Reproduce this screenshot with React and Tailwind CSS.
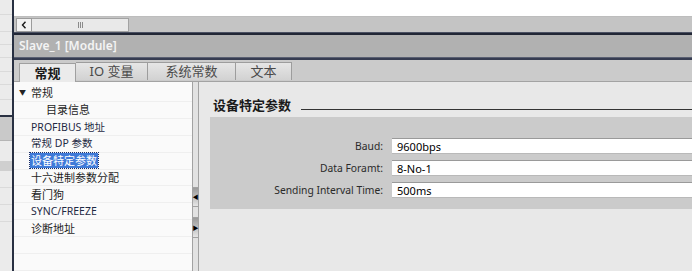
import React from 'react';

const font = "font-['Noto_Sans','Noto_Sans_CJK_SC',sans-serif]";

const treeItems = [
    { label: '常规', indent: false, caret: true },
    { label: '目录信息', indent: true },
    { label: 'PROFIBUS 地址' },
    { label: '常规 DP 参数' },
    { label: '设备特定参数', selected: true },
    { label: '十六进制参数分配' },
    { label: '看门狗' },
    { label: 'SYNC/FREEZE' },
    { label: '诊断地址' },
    { label: '' },
    { label: '' },
];

const tabs = [
    { label: '常规', w: 'w-[57px]', active: true },
    { label: 'IO 变量', w: 'w-[72px]' },
    { label: '系统常数', w: 'w-[88px]' },
    { label: '文本', w: 'w-[56px]' },
];

const params = [
    { label: 'Baud:', value: '9600bps' },
    { label: 'Data Foramt:', value: '8-No-1' },
    { label: 'Sending Interval Time:', value: '500ms' },
];

const LeftStrip = () => (
    <div className="w-[12px] h-full flex flex-col bg-[#ebebeb] shrink-0">
        <div className="h-[15px] border-b border-[#dadada]"></div>
        <div className="h-[17px] border-b border-[#dadada]"></div>
        <div className="h-[13px] border-b border-[#dadada]"></div>
        <div className="h-[13px] border-b border-[#dadada]"></div>
        <div className="h-[14px] border-b border-[#dadada]"></div>
        <div className="h-[13px] border-b border-[#dadada]"></div>
        <div className="h-[15px] border-b border-[#dadada]"></div>
        <div className="h-[17px] border-b-2 border-[#2a3142]"></div>
        <div className="h-[24px] bg-[#c9c9c9] border-b border-[#b5b5b5]"></div>
        <div className="h-[20px]"></div>
        <div className="h-[10px] bg-[#cfcfcf]"></div>
        <div className="h-[17px] border-b border-[#dadada]"></div>
        <div className="h-[17px] border-b border-[#dadada]"></div>
        <div className="h-[17px] border-b border-[#dadada]"></div>
        <div className="flex-1"></div>
    </div>
);

const App = () => {
    return (
        <div className={`w-[692px] h-[271px] flex overflow-hidden bg-[#e8e8e8] ${font}`}>
            <LeftStrip />
            <div className="w-[2px] h-full bg-[#283042] shrink-0"></div>

            <div className="flex-1 flex flex-col min-w-0">
                {/* top white strip */}
                <div className="h-[16px] bg-white"></div>

                {/* horizontal scrollbar */}
                <div className="h-[16px] bg-[#c4c4c4] flex items-center pl-[2px] border-t border-[#bdbdbd]">
                    <div className="w-[16px] h-[14px] bg-[#f2f2f2] border border-[#9c9c9c] flex items-center justify-center">
                        <svg width="6" height="8" viewBox="0 0 6 8">
                            <path d="M4.5 0.8 L1.5 4 L4.5 7.2" fill="none" stroke="#1a1a1a" strokeWidth="1.4" />
                        </svg>
                    </div>
                    <div className="w-[97px] h-[14px] bg-[#e9e9e9] border border-[#a3a3a3] border-l-0 flex items-center justify-center gap-px">
                        <div className="w-px h-[6px] bg-[#8a8a8a]"></div>
                        <div className="w-px h-[6px] bg-[#8a8a8a]"></div>
                        <div className="w-px h-[6px] bg-[#8a8a8a]"></div>
                    </div>
                </div>

                <div className="h-[3px] bg-[#222736] border-t border-[#4b5163]"></div>

                {/* title bar */}
                <div className="h-[22px] bg-[#b1b1b1] flex items-center pl-[5px]">
                    <span className="text-[12px] font-semibold text-[#f4f4f4] leading-none">Slave_1 [Module]</span>
                </div>

                <div className="h-[3px] bg-[#363c51] border-t border-[#5a6072]"></div>

                {/* tab bar */}
                <div className="h-[22px] bg-[#cbcbcb] border-b border-[#a3a3a3] flex items-end pl-[5px]">
                    {tabs.map(t => (
                        <div
                            key={t.label}
                            className={`${t.w} flex items-center justify-center border border-b-0 text-[13px] leading-none ${t.active
                                ? 'h-[19px] -mb-px bg-[#ebebeb] border-[#a0a0a0] font-bold text-[#1a1a1a]'
                                : 'h-[18px] mb-px bg-gradient-to-b from-[#e6e6e6] to-[#d2d2d2] border-[#9d9d9d] border-l-0 text-[#4a4a4a]'}`}
                        >
                            {t.label}
                        </div>
                    ))}
                </div>

                {/* content */}
                <div className="flex-1 flex min-h-0">
                    {/* tree */}
                    <div className="w-[178px] bg-[#fafafa] pt-[3px] flex flex-col">
                        {treeItems.map((item, i) => (
                            <div key={i} className="h-[17px] flex items-center border-b border-[#efefef] text-[11px] leading-none text-[#1e1e1e]">
                                <div className="w-[17px] flex justify-center shrink-0">
                                    {item.caret && <span className="text-[7px] text-[#222]">▼</span>}
                                </div>
                                {item.indent && <div className="w-[15px] shrink-0"></div>}
                                {item.label && (
                                    <span className={item.selected
                                        ? 'bg-[#3f7ad8] text-white outline-1 outline-dotted outline-[#1a2f6a] px-px py-[2px] -ml-px'
                                        : /[A-Z]/.test(item.label) ? 'text-[#1f2a44] text-[10.5px]' : ''}>
                                        {item.label}
                                    </span>
                                )}
                            </div>
                        ))}
                    </div>

                    {/* splitter */}
                    <div className="w-[7px] bg-[#e2e2e2] border-x border-[#a2a2a2] flex flex-col">
                        <div className="h-[105px]"></div>
                        <div className="h-[20px] bg-gradient-to-b from-[#9a9a9a] to-[#e6e6e6] border-y border-[#a2a2a2] flex items-center justify-center text-[6px] leading-none text-black">◀</div>
                        <div className="h-[10px]"></div>
                        <div className="h-[21px] bg-gradient-to-b from-[#9a9a9a] to-[#e6e6e6] border-y border-[#a2a2a2] flex items-center justify-center text-[6px] leading-none text-black">▶</div>
                    </div>

                    {/* right panel */}
                    <div className="flex-1 min-w-0 bg-[#e8e8e8] flex flex-col">
                        <div className="flex items-end pl-[14px] mt-[13px] h-[17px]">
                            <span className="text-[13px] font-bold leading-none text-[#1a1a1a] shrink-0">设备特定参数</span>
                            <div className="flex-1 h-px bg-[#333] ml-[10px] mb-[2px]"></div>
                        </div>
                        <div className="ml-[11px] mt-[5px] bg-[#cbcbcb] pt-[21px] pb-[11px] flex flex-col gap-[6px]">
                            {params.map(p => (
                                <div key={p.label} className="flex items-center">
                                    <div className="w-[173px] text-right text-[10.3px] leading-none text-[#2a2a2a] shrink-0">{p.label}</div>
                                    <div className="ml-[9px] flex-1 h-[16px] bg-white border-t border-[#9a9a9a] border-b border-b-[#b9b9b9] flex items-center pl-[5px] text-[11px] leading-none text-black">
                                        {p.value}
                                    </div>
                                </div>
                            ))}
                        </div>
                    </div>
                </div>
            </div>
        </div>
    );
};

export default App;
